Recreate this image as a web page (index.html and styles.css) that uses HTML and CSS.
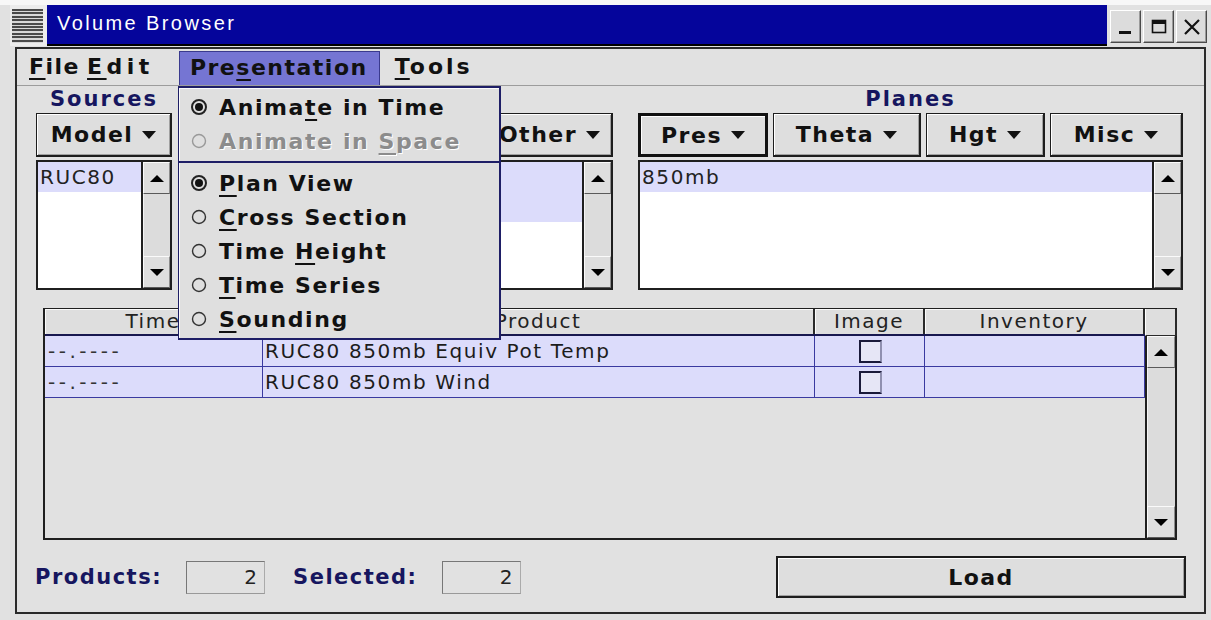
FILE: index.html
```html
<!DOCTYPE html>
<html lang="en">
<head>
<meta charset="utf-8">
<title>Volume Browser</title>
<link rel="stylesheet" href="styles.css">
</head>
<body>
<div class="window">
  <header class="titlebar">
    <div class="sysmenu"><span class="grip"></span></div>
    <div class="caption">Volume Browser</div>
    <div class="controls">
      <span class="ctl"><svg width="18" height="18" viewBox="0 0 18 18"><rect x="2" y="13" width="12" height="3" fill="#111"/></svg></span>
      <span class="ctl"><svg width="18" height="18" viewBox="0 0 18 18"><rect x="2.5" y="2.5" width="13" height="12" fill="none" stroke="#111" stroke-width="1.6"/><rect x="2" y="2" width="14" height="4" fill="#111"/></svg></span>
      <span class="ctl"><svg width="18" height="18" viewBox="0 0 18 18"><path d="M2 2L16 16M16 2L2 16" stroke="#111" stroke-width="2.2"/></svg></span>
    </div>
  </header>

  <div class="frame">
    <nav class="menubar">
      <span class="menu m-file"><u>F</u>ile</span>
      <span class="menu m-edit"><u>E</u>dit</span>
      <span class="menu m-pres open">Pre<u>s</u>entation</span>
      <span class="menu m-tools"><u>T</u>ools</span>
    </nav>

    <section class="panels">
      <div class="col">
        <h2 class="col-title">Sources</h2>
        <div class="btnrow">
          <button class="drop">Model<i class="caret"></i></button>
        </div>
        <div class="list">
          <ul class="items"><li class="sel">RUC80</li></ul>
          <div class="vscroll"><span class="arrow up"></span><span class="track"></span><span class="arrow down"></span></div>
        </div>
      </div>

      <div class="col">
        <h2 class="col-title">Fields</h2>
        <div class="btnrow fields">
          <button class="drop">Temp<i class="caret"></i></button>
          <button class="drop">Wind<i class="caret"></i></button>
          <button class="drop">Other<i class="caret"></i></button>
        </div>
        <div class="list">
          <ul class="items"><li class="sel">Equiv Pot Temp</li><li class="sel">Wind</li></ul>
          <div class="vscroll"><span class="arrow up"></span><span class="track"></span><span class="arrow down"></span></div>
        </div>
      </div>

      <div class="col">
        <h2 class="col-title">Planes</h2>
        <div class="btnrow planes">
          <button class="drop focus">Pres<i class="caret"></i></button>
          <button class="drop">Theta<i class="caret"></i></button>
          <button class="drop">Hgt<i class="caret"></i></button>
          <button class="drop">Misc<i class="caret"></i></button>
        </div>
        <div class="list">
          <ul class="items"><li class="sel">850mb</li></ul>
          <div class="vscroll"><span class="arrow up"></span><span class="track"></span><span class="arrow down"></span></div>
        </div>
      </div>
    </section>

    <section class="table-pane">
      <div class="thead">
        <span>Time</span><span>Product</span><span>Image</span><span>Inventory</span>
      </div>
      <span class="corner"></span>
      <div class="tbody">
        <div class="trow"><span class="t-time">--.----</span><span>RUC80 850mb Equiv Pot Temp</span><span class="t-img"><i class="check"></i></span><span></span></div>
        <div class="trow"><span class="t-time">--.----</span><span>RUC80 850mb Wind</span><span class="t-img"><i class="check"></i></span><span></span></div>
      </div>
      <div class="vscroll"><span class="arrow up"></span><span class="track"></span><span class="arrow down"></span></div>
    </section>

    <footer class="status">
      <span class="stat">Products:</span><output class="field">2</output>
      <span class="stat">Selected:</span><output class="field">2</output>
      <button class="load">Load</button>
    </footer>

    <div class="popup">
      <div class="mi"><svg class="radio" width="18" height="18" viewBox="0 0 18 18"><circle cx="9" cy="9" r="7" fill="none" stroke="#222" stroke-width="2"/><circle cx="9" cy="9" r="4" fill="#111"/></svg><span>Anima<u>t</u>e in Time</span></div>
      <div class="mi disabled"><svg class="radio" width="18" height="18" viewBox="0 0 18 18"><circle cx="9" cy="9" r="6.5" fill="none" stroke="#999" stroke-width="1.4"/></svg><span>Animate in <u>S</u>pace</span></div>
      <hr class="sep">
      <div class="mi"><svg class="radio" width="18" height="18" viewBox="0 0 18 18"><circle cx="9" cy="9" r="7" fill="none" stroke="#222" stroke-width="2"/><circle cx="9" cy="9" r="4" fill="#111"/></svg><span><u>P</u>lan View</span></div>
      <div class="mi"><svg class="radio" width="18" height="18" viewBox="0 0 18 18"><circle cx="9" cy="9" r="6.5" fill="none" stroke="#333" stroke-width="1.4"/></svg><span><u>C</u>ross Section</span></div>
      <div class="mi"><svg class="radio" width="18" height="18" viewBox="0 0 18 18"><circle cx="9" cy="9" r="6.5" fill="none" stroke="#333" stroke-width="1.4"/></svg><span>Time <u>H</u>eight</span></div>
      <div class="mi"><svg class="radio" width="18" height="18" viewBox="0 0 18 18"><circle cx="9" cy="9" r="6.5" fill="none" stroke="#333" stroke-width="1.4"/></svg><span><u>T</u>ime Series</span></div>
      <div class="mi"><svg class="radio" width="18" height="18" viewBox="0 0 18 18"><circle cx="9" cy="9" r="6.5" fill="none" stroke="#333" stroke-width="1.4"/></svg><span><u>S</u>ounding</span></div>
    </div>
  </div>
</div>
</body>
</html>
```

FILE: styles.css
```css
* { box-sizing: border-box; }

html, body { margin: 0; padding: 0; }

body {
  width: 1211px;
  height: 620px;
  overflow: hidden;
  background: #e1e1e1;
  color: #111;
  font-family: "DejaVu Sans", "Liberation Sans", sans-serif;
}

u {
  text-decoration: underline;
  text-decoration-thickness: 2px;
  text-underline-offset: 4px;
}

/* ---------- window chrome ---------- */
.window {
  display: flex;
  flex-direction: column;
  height: 620px;
  border-top: 5px solid #f7f7f7;
}

.titlebar {
  display: flex;
  height: 41px;
  flex: none;
}

.sysmenu {
  width: 37px;
  margin-left: 10px;
  padding: 4px 4px 3px 2px;
  background: #ececec;
}

.grip {
  display: block;
  height: 100%;
  background: repeating-linear-gradient(to bottom, #4a4a4a 0 2px, #d8d8d8 2px 3.4px);
}

.caption {
  flex: 1;
  background: #05059b;
  border-bottom: 2px solid #000;
  color: #fff;
  font-family: "Liberation Sans", Arial, sans-serif;
  font-size: 20px;
  letter-spacing: 2.4px;
  line-height: 37px;
  padding-left: 10px;
}

.controls {
  display: flex;
  gap: 2px;
  padding: 5px 4px 3px 3px;
}

.ctl {
  width: 31px;
  height: 33px;
  display: flex;
  align-items: center;
  justify-content: center;
  background: #dcdcdc;
  border: 1px solid;
  border-color: #fff #4a4a4a #4a4a4a #fff;
  box-shadow: inset -1px -1px 0 #9a9a9a;
}

.frame {
  position: relative;
  flex: 1;
  margin: 1px 5px 6px 15px;
  border: 2px solid #2a2a2a;
  display: flex;
  flex-direction: column;
  background: #e1e1e1;
}

/* ---------- menu bar ---------- */
.menubar {
  display: flex;
  height: 37px;
  flex: none;
  border-bottom: 1px solid #9c9c9c;
  padding-left: 1px;
  font-weight: bold;
  font-size: 22px;
  letter-spacing: 1.5px;
}

.menu {
  margin-top: 2px;
  height: 34px;
  line-height: 32px;
  padding: 0 10px;
}

.m-file { padding-left: 11px; padding-right: 5px; }
.m-edit { letter-spacing: 4.5px; padding-left: 2px; padding-right: 25px; }
.m-pres { padding-left: 10px; padding-right: 11px; }
.m-tools { padding-left: 15px; letter-spacing: 3px; }

.menu.open {
  background: #7575d3;
  border: 1px solid #3a3a8e;
  border-bottom: none;
  line-height: 31px;
}

/* ---------- source / field / plane columns ---------- */
.panels {
  display: grid;
  grid-template-columns: 136px 416px 545px;
  column-gap: 25px;
  padding: 0 19px;
}

.col {
  display: flex;
  flex-direction: column;
  min-width: 0;
}

.col-title {
  margin: 0;
  height: 27px;
  line-height: 27px;
  text-align: center;
  font-size: 21px;
  font-weight: bold;
  letter-spacing: 2px;
  color: #16165f;
}

.btnrow {
  display: grid;
  grid-template-columns: minmax(0, 1fr);
  height: 44px;
  gap: 4px;
}

.btnrow.fields { grid-template-columns: repeat(2, minmax(0, 1fr)) 126px; }
.btnrow.planes { grid-template-columns: 130px 148px 119px minmax(0, 1fr); column-gap: 5px; }

.drop {
  display: flex;
  align-items: center;
  justify-content: center;
  gap: 9px;
  min-width: 0;
  overflow: hidden;
  margin: 0;
  padding: 0 6px;
  font-family: inherit;
  font-weight: bold;
  font-size: 22px;
  letter-spacing: 1.5px;
  color: #111;
  white-space: nowrap;
  background: #dedede;
  border: 1px solid #1d1d1d;
  border-right-width: 2px;
  border-bottom-width: 2px;
  box-shadow: inset 1px 1px 0 #fff, inset -1px -1px 0 #a0a0a0;
}

.drop.focus {
  border: 3px solid #111;
  box-shadow: inset 1px 1px 0 #fff;
}

.caret {
  flex: none;
  width: 0;
  height: 0;
  border-left: 7px solid transparent;
  border-right: 7px solid transparent;
  border-top: 8px solid #111;
}

.list {
  display: flex;
  margin-top: 3px;
  height: 130px;
  border: 2px solid #1f1f1f;
  background: #fff;
}

.items {
  flex: 1;
  margin: 0;
  padding: 0;
  list-style: none;
  overflow: hidden;
  font-size: 20px;
  letter-spacing: 1.6px;
  color: #222;
}

.items li {
  height: 30px;
  line-height: 30px;
  padding-left: 2px;
  white-space: nowrap;
}

.items li.sel { background: #dcdcfb; }

/* ---------- scroll bars ---------- */
.vscroll {
  width: 29px;
  flex: none;
  display: flex;
  flex-direction: column;
  border-left: 2px solid #1f1f1f;
  background: #dcdcdc;
}

.arrow {
  height: 32px;
  flex: none;
  display: flex;
  align-items: center;
  justify-content: center;
  background: #dedede;
  border: 1px solid;
  border-color: #fafafa #8c8c8c #5a5a5a #fafafa;
}

.arrow::before {
  content: "";
  border-left: 7px solid transparent;
  border-right: 7px solid transparent;
}

.arrow.up::before { border-bottom: 7px solid #000; }
.arrow.down::before { border-top: 7px solid #000; }

.track {
  flex: 1;
  background: #dcdcdc;
  border-left: 1px solid #f4f4f4;
}

/* ---------- product table ---------- */
.table-pane {
  display: grid;
  grid-template-columns: 1fr 32px;
  grid-template-rows: 27px 1fr;
  margin: 18px 27px 0 26px;
  height: 232px;
  flex: none;
  border: 2px solid #1f1f1f;
  border-top-width: 1px;
  border-right: none;
  background: #e1e1e1;
}

.thead,
.trow {
  display: grid;
  grid-template-columns: 218px 552px 110px 1fr;
}

.thead {
  border-bottom: 2px solid #18184f;
  font-size: 20px;
  letter-spacing: 1.5px;
  color: #222;
}

.thead span {
  text-align: center;
  line-height: 24px;
  background: #dedede;
  border-right: 2px solid #2a2a2a;
  box-shadow: inset 1px 1px 0 #fafafa;
}

.corner {
  background: #dedede;
  border-left: 1px solid #fff;
  border-right: 2px solid #2a2a2a;
  border-bottom: 1px solid #2a2a2a;
}

.tbody {
  display: flex;
  flex-direction: column;
}

.trow {
  height: 31px;
  background: #dcdcfb;
  border-bottom: 1px solid #3a3aa0;
  font-size: 20px;
  letter-spacing: 1.6px;
  color: #1c1c1c;
}

.trow span {
  line-height: 30px;
  padding-left: 2px;
  border-right: 1px solid #3a3aa0;
  white-space: nowrap;
}

.trow .t-time { padding-left: 3px; letter-spacing: 3.5px; color: #333; }

.t-img {
  display: flex;
  align-items: center;
  justify-content: center;
}

.check {
  width: 23px;
  height: 23px;
  border: 2px solid #1a1a3a;
  border-right-color: #9090b0;
  background: #e6e6f6;
}

.table-pane .vscroll {
  width: 32px;
  border-right: 2px solid #1f1f1f;
}

/* ---------- status row ---------- */
.status {
  display: flex;
  align-items: center;
  height: 42px;
  margin-top: 16px;
  padding: 0 18px;
  flex: none;
}

.stat {
  font-size: 21px;
  font-weight: bold;
  letter-spacing: 1.5px;
  color: #16165f;
}

.field {
  width: 79px;
  height: 33px;
  margin: 0 28px 0 24px;
  padding-right: 7px;
  border: 1px solid #777;
  border-right-color: #aaa;
  border-bottom-color: #999;
  text-align: right;
  line-height: 31px;
  font-size: 20px;
  color: #222;
}

.status .stat + .field:last-of-type { margin: 0 0 0 24px; }

.load {
  margin-left: auto;
  width: 410px;
  height: 42px;
  font-family: inherit;
  font-weight: bold;
  font-size: 22px;
  letter-spacing: 1.5px;
  color: #111;
  background: #dedede;
  border: 2px solid #1d1d1d;
  box-shadow: inset 1px 1px 0 #fff, inset -1px -1px 0 #a0a0a0;
}

/* ---------- open Presentation menu ---------- */
.popup {
  position: absolute;
  left: 161px;
  top: 37px;
  width: 323px;
  height: 254px;
  padding-top: 2px;
  background: #dfdfdf;
  border: 2px solid #1e1e66;
  border-left-width: 1px;
  font-weight: bold;
  font-size: 22px;
  letter-spacing: 1.6px;
  box-shadow: inset 1px 1px 0 #fafafa;
}

.mi {
  display: flex;
  align-items: center;
  height: 34px;
  padding-left: 11px;
  gap: 11px;
  white-space: nowrap;
}

.mi .radio { flex: none; }

.mi.disabled {
  color: #8c8c8c;
  text-shadow: 1px 1px 0 #fff;
}

.sep {
  margin: 3px 0 3px;
  height: 0;
  border: none;
  border-top: 2px solid #1e1e66;
}
```
